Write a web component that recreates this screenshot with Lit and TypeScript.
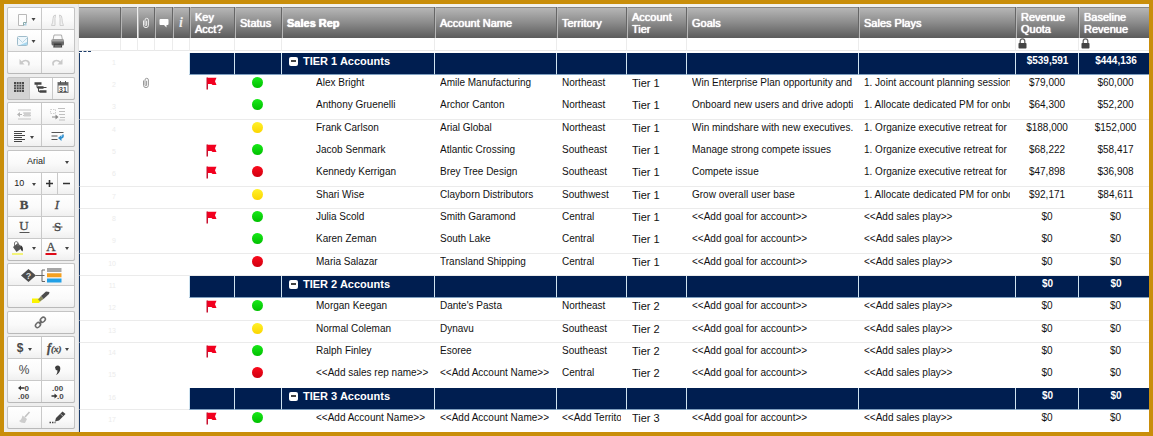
import { LitElement, html, svg, css, nothing } from "lit";
import { customElement, property } from "lit/decorators.js";
import { classMap } from "lit/directives/class-map.js";

type Tone = "green" | "yellow" | "red";

interface TierRow {
  kind: "tier";
  name: string;
  quota: string;
  baseline: string;
  line?: boolean;
}

interface AccountRow {
  kind: "account";
  flag?: boolean;
  clip?: boolean;
  tone: Tone;
  rep: string;
  account: string;
  territory: string;
  tier: string;
  goals: string;
  plays: string;
  quota: string;
  baseline: string;
  line?: boolean;
}

const GOAL = "<<Add goal for account>>";
const PLAY = "<<Add sales play>>";

const account = (
  flag: boolean, tone: Tone, rep: string, name: string, territory: string, tier: string,
  goals = GOAL, plays = PLAY, quota = "$0", baseline = "$0", line = false, clip = false
): AccountRow => ({ kind: "account", flag, tone, rep, account: name, territory, tier, goals, plays, quota, baseline, line, clip });

const ROWS: (TierRow | AccountRow)[] = [
  { kind: "tier", name: "TIER 1 Accounts", quota: "$539,591", baseline: "$444,136" },
  account(true, "green", "Alex Bright", "Amile Manufacturing", "Northeast", "Tier 1", "Win Enterprise Plan opportunity and", "1. Joint account planning session", "$79,000", "$60,000", false, true),
  account(false, "green", "Anthony Gruenelli", "Archor Canton", "Northeast", "Tier 1", "Onboard new users and drive adopti", "1. Allocate dedicated PM for onbo", "$64,300", "$52,200", true),
  account(false, "yellow", "Frank Carlson", "Arial Global", "Northeast", "Tier 1", "Win mindshare with new executives.", "1. Organize executive retreat for", "$188,000", "$152,000"),
  account(true, "green", "Jacob Senmark", "Atlantic Crossing", "Southeast", "Tier 1", "Manage strong compete issues", "1. Organize executive retreat for", "$68,222", "$58,417"),
  account(true, "red", "Kennedy Kerrigan", "Brey Tree Design", "Southeast", "Tier 1", "Compete issue", "1. Organize executive retreat for", "$47,898", "$36,908", true),
  account(false, "yellow", "Shari Wise", "Clayborn Distributors", "Southwest", "Tier 1", "Grow overall user base", "1. Allocate dedicated PM for onbo", "$92,171", "$84,611", true),
  account(true, "green", "Julia Scold", "Smith Garamond", "Central", "Tier 1"),
  account(false, "green", "Karen Zeman", "South Lake", "Central", "Tier 1", GOAL, PLAY, "$0", "$0", true),
  account(false, "red", "Maria Salazar", "Transland Shipping", "Central", "Tier 1", GOAL, PLAY, "$0", "$0", true),
  { kind: "tier", name: "TIER 2 Accounts", quota: "$0", baseline: "$0" },
  account(true, "green", "Morgan Keegan", "Dante's Pasta", "Northeast", "Tier 2", GOAL, PLAY, "$0", "$0", true),
  account(false, "yellow", "Normal Coleman", "Dynavu", "Southeast", "Tier 2", GOAL, PLAY, "$0", "$0", true),
  account(true, "green", "Ralph Finley", "Esoree", "Southeast", "Tier 2"),
  account(false, "red", "<<Add sales rep name>>", "<<Add Account Name>>", "Central", "Tier 2"),
  { kind: "tier", name: "TIER 3 Accounts", quota: "$0", baseline: "$0", line: true },
  account(true, "green", "<<Add Account Name>>", "<<Add Account Name>>", "<<Add Territo", "Tier 3"),
];

const caret = (x: number, y = 12) => svg`<path d="M${x - 2} ${y - 1}h4l-2 3z" fill="#444"/>`;

const clipIcon = (color: string) => html`<svg class="clip" viewBox="0 0 8 12" aria-hidden="true">
  <path d="M1.500 3.500v4.700a2.400 2.400 0 0 0 4.900 0V3a1.700 1.700 0 0 0-3.400 0v5a.8.8 0 0 0 1.600 0V3.800" fill="none" stroke=${color} stroke-width="1"/>
</svg>`;

const ICONS = {
  sheet: svg`<path d="M11.500 6.500h8v8l-3 3h-5z" fill="#fdfdfd" stroke="#b9b9b9"/><path d="M13 17.500h3.500l3-3v3z" fill="#a8cfe4"/><path d="M16.500 17.500v-3h3" fill="none" stroke="#8aa"/>${caret(26.5, 11)}`,
  book: svg`<path d="M14.500 7q-2.500 0-2.500 3.500 0 4-1.500 7h3.500v-7zM18.500 7q2.500 0 2.500 3.500 0 4 1.500 7h-3.500v-7z" fill="#f1f1f1" stroke="#c6c6c6" stroke-width=".8"/>`,
  mail: svg`<rect x="10.500" y="6.500" width="10" height="9" rx="1" fill="#eef7fc" stroke="#9fbccb"/><path d="M11 8l4.500 4.500L20 8" fill="none" stroke="#b9d6e6"/><path d="M13 15l7-3v3z" fill="#a8d8f0"/>${caret(26.5, 11)}`,
  print: svg`<path d="M13 5h7.500l1 5h-9.500z" fill="#fafafa" stroke="#999" stroke-width=".8"/><rect x="10.500" y="9.500" width="12.500" height="6" rx="1.500" fill="#696969"/><rect x="10.500" y="9.500" width="12.500" height="2" fill="#a3a3a3"/><path d="M13 13.500h7.500l.7 4h-9z" fill="#3d3d3d"/><path d="M13.500 16h6.500" stroke="#999"/>`,
  undo: svg`<path d="M14.500 10.500q3-3 6-1.500 2.500 1.500 1 4.500" fill="none" stroke="#c9c9c9" stroke-width="1.600"/><path d="M12.500 7v5.500h5z" fill="#c9c9c9"/>`,
  redo: svg`<path d="M19.500 10.500q-3-3-6-1.500-2.500 1.500-1 4.500" fill="none" stroke="#c9c9c9" stroke-width="1.600"/><path d="M21.500 7v5.500h-5z" fill="#c9c9c9"/>`,
  grid: svg`<rect x="6" y="5" width="10" height="10" fill="#4a4a4a"/><path d="M8.500 5v10M11 5v10M13.500 5v10M6 7.500h10M6 10h10M6 12.500h10" stroke="#bdbdbd" stroke-width=".8"/>`,
  gantt: svg`<path d="M4.500 6.500h7M7.500 10.500h6M9.500 14.500h7" stroke="#444" stroke-width="2.600"/><path d="M7 7v3.500h2M8.500 11v3.500h2M12 10.500h4.500" fill="none" stroke="#444"/>`,
  calendar: svg`<rect x="6" y="5.500" width="10" height="10" fill="#fff" stroke="#777"/><path d="M6 6h10v2.500H6z" fill="#666"/><path d="M8.500 4v3M13.500 4v3" stroke="#555"/><text x="11" y="14.500" text-anchor="middle" class="tiny">31</text>`,
  outdent: svg`<path d="M11 7h13M16 10h8M16 12.500h8M11 16h13" stroke="#c4c4c4"/><path d="M17 9.500h6.500v4H17z" fill="#cfcfcf"/><path d="M10 11.500l3-2.500v5zM12 11h3v1h-3z" fill="#b5b5b5"/>`,
  indent: svg`<path d="M17 5.500h7M18 8.500h6M18 11.500h6M19 14.500h5M18 17h6" stroke="#c0c0c0"/><path d="M9.500 6.500h5v4h-5z" fill="none" stroke="#cfcfcf" stroke-dasharray="1.500 1"/><path d="M11 14h4" stroke="#888"/><path d="M14.500 11.500l3 2.500-3 2.500z" fill="#888"/>`,
  align: svg`<path d="M7 6.500h11M7 8.500h8M7 10.500h11M7 12.500h8M7 14.500h11M7 16.500h8" stroke="#444"/>${caret(25)}`,
  wrap: svg`<path d="M10.500 7.500h12M10.500 11h6M10.500 14.500h6" stroke="#555" stroke-width="1.200"/><path d="M22 9.500v1.500q0 2-2.500 2" fill="none" stroke="#2d8fd0" stroke-width="1.600"/><path d="M17 13l3.500-3v6z" fill="#2d8fd0"/>`,
  bold: svg`<text x="17" y="15" text-anchor="middle" class="serif strong">B</text>`,
  italic: svg`<text x="16" y="15" text-anchor="middle" class="serif slant">I</text>`,
  underline: svg`<text x="17" y="14" text-anchor="middle" class="serif">U</text><path d="M12.500 16.500h10" stroke="#555"/>`,
  strike: svg`<text x="16.500" y="15" text-anchor="middle" class="serif">S</text><path d="M11.500 11h10" stroke="#444"/>`,
  fill: svg`<path d="M6 9l5-4 4 5-5.500 4z" fill="#555"/><path d="M7.500 8V4.500q1.500-2 3.500 0V8" fill="none" stroke="#777"/><path d="M13.500 7q3.500 2 2 6.500-2-1-2-3.500z" fill="#333"/><path d="M5 16h11" stroke="#f3f37a" stroke-width="2"/>${caret(27, 10)}`,
  color: svg`<text x="10" y="13" text-anchor="middle" class="serif">A</text><path d="M4.500 16h11" stroke="#e00b18" stroke-width="2"/>${caret(26, 10)}`,
  conditional: svg`<path d="M14 11.500L21.500 5l7.500 6.500-7.500 6.500z" fill="#4c4c4c"/><text x="21.500" y="15" text-anchor="middle" class="mark">?</text><path d="M29 11.500h8.500M38 6h-3v11.500h3" fill="none" stroke="#666"/><path d="M40 6h14.500" stroke="#a5a5a5" stroke-width="4"/><path d="M40 11.200h14.500" stroke="#f5a020" stroke-width="4"/><path d="M40 16.500h14.500" stroke="#22a0e6" stroke-width="4"/>`,
  highlight: svg`<path d="M25 12.500h8l1 2-2 2.500h-7z" fill="#fbf400"/><path d="M31 13.500l3-3.500 2.500 3-3.500 2.500z" fill="#8a8a5a"/><path d="M34 10l5-4.500 3.500.500-.500 2-5.500 5z" fill="#4d4d4d"/>`,
  link: svg`<g fill="none" stroke="#6b6b6b" stroke-width="1.500"><ellipse cx="31" cy="14" rx="2.900" ry="2.100" transform="rotate(-45 31 14)"/><ellipse cx="35.800" cy="8.800" rx="2.900" ry="2.100" transform="rotate(-45 35.800 8.800)"/><path d="M32 13l3-3.300"/></g>`,
  dollar: svg`<text x="13" y="15" text-anchor="middle" class="sans strong big">$</text>${caret(23)}`,
  formula: svg`<text x="6" y="15" class="serif slant strong fx">f<tspan class="fxs">(x)</tspan></text>${caret(26)}`,
  percent: svg`<text x="17" y="15" text-anchor="middle" class="sans big">%</text>`,
  comma: svg`<path d="M14 8.500q.500-2 2.700-2 2.800.300 2.600 3.500-.300 4-4.300 6 1.700-2.500 1.500-4.500-2.300-.300-2.500-3z" fill="#3d3d3d"/>`,
  lessDecimal: svg`<text x="17.500" y="10" class="deci">0</text><path d="M11 7l3-2.500V6.300h3.500v1.400h-3.500v1.800z" fill="#333"/><text x="11" y="18" class="deci">.00</text>`,
  moreDecimal: svg`<text x="11" y="10" class="deci">.00</text><path d="M16.500 15l-3-2.500v1.800h-3v1.400h3v1.800z" fill="#333"/><text x="16" y="18" class="deci">.0</text>`,
  brush: svg`<path d="M22.500 6l-4.500 5" stroke="#c3c3c3" stroke-width="1.600"/><path d="M15.500 9.500l4.500 3.500-2 4q-3.500.500-6-2 2.500-1 3.500-5.500z" fill="#cdcdcd"/>`,
  pencil: svg`<path d="M14 15.500l1-3.500 6.500-6.500 3 2.500-6.500 6.500z" fill="#444"/><path d="M19.500 8l3 2.500" stroke="#ddd" stroke-width=".7"/><path d="M8.500 16.500h6" stroke="#444" stroke-width="1.600" stroke-dasharray="1.500 1"/>`,
};

type IconName = keyof typeof ICONS;

@customElement("tool-button")
export class ToolButton extends LitElement {
  @property() icon: IconName = "sheet";
  @property() label = "";
  @property({ type: Number }) span = 34;
  @property({ type: Boolean }) active = false;

  static styles = css`
    :host { display: block; min-width: 0; }
    .tool {
      display: flex; align-items: center; justify-content: center;
      width: 100%; height: 100%; padding: 0; border: 0; overflow: hidden;
      background: linear-gradient(#fff, #fafafa 60%, #f0f0f0);
    }
    .tool.active { background: #d3d3d3; }
    svg { display: block; flex: none; height: 22px; }
    text { fill: #484848; font-family: "Liberation Sans", Arial, sans-serif; font-size: 10px; }
    .serif { font-family: "Liberation Serif", "Times New Roman", serif; font-size: 13px; stroke: #484848; stroke-width: .3px; }
    .strong { font-weight: bold; }
    .slant { font-style: italic; }
    .big { font-size: 12px; }
    .tiny { font-size: 7px; font-weight: bold; }
    .mark { font-size: 9px; font-weight: bold; fill: #ddd; }
    .fx { font-size: 12px; }
    .fxs { font-size: 9px; }
    .deci { font-size: 8px; font-weight: bold; }
  `;

  render() {
    return html`<button class=${classMap({ tool: true, active: this.active })} type="button" aria-label=${this.label} title=${this.label}>
      <svg width=${this.span} viewBox="0 0 ${this.span} 22" aria-hidden="true">${ICONS[this.icon]}</svg>
    </button>`;
  }
}

@customElement("sheet-toolbar")
export class SheetToolbar extends LitElement {
  static styles = css`
    :host {
      display: flex; flex-direction: column; justify-content: space-between;
      box-sizing: border-box; width: 75px; flex: none;
      padding: 3px 3px 4px; background: #eee;
      font-family: "Liberation Sans", Arial, sans-serif;
    }
    .group {
      display: grid; grid-template-columns: 1fr 1fr; grid-auto-rows: 21px; gap: 1px;
      background: #c9c9c9; border: 1px solid #c4c4c4; border-bottom: 0; border-radius: 2px; overflow: hidden;
      box-shadow: 0 1px 0 #b9b9b9;
    }
    .three { grid-template-columns: 1fr 1fr 1fr; }
    .one { grid-template-columns: 1fr; }
    .wide { grid-column: 1 / -1; }
    .pair { display: grid; grid-template-columns: 1fr 1fr; gap: 1px; }
    .picker { position: relative; display: block; background: linear-gradient(#fff, #fafafa 60%, #f0f0f0); }
    .picker select {
      appearance: none; display: block; width: 100%; height: 100%; margin: 0; padding: 0 10px 0 0; border: 0;
      background: none; color: #222; font: 9px "Liberation Sans", Arial, sans-serif; text-align-last: center;
    }
    .picker svg { position: absolute; right: 5px; top: 10px; width: 4px; height: 3px; }
    .step { padding: 0; border: 0; background: linear-gradient(#fff, #fafafa 60%, #f0f0f0); display: grid; place-items: center; }
    .step svg { width: 7px; height: 7px; }
  `;

  private tool(icon: IconName, label: string, span = 34, active = false) {
    return html`<tool-button .icon=${icon} .label=${label} .span=${span} .active=${active}></tool-button>`;
  }

  private arrow() {
    return html`<svg viewBox="0 0 4 3" aria-hidden="true"><path d="M0 0h4L2 3z" fill="#444"/></svg>`;
  }

  render() {
    return html`
      <div class="group">
        ${this.tool("sheet", "New")}${this.tool("book", "Open")}
        ${this.tool("mail", "Send")}${this.tool("print", "Print")}
        ${this.tool("undo", "Undo")}${this.tool("redo", "Redo")}
      </div>
      <div class="group three">
        ${this.tool("grid", "Grid view", 22, true)}${this.tool("gantt", "Gantt view", 22)}${this.tool("calendar", "Calendar view", 22)}
      </div>
      <div class="group">
        ${this.tool("outdent", "Outdent")}${this.tool("indent", "Indent")}
        ${this.tool("align", "Align")}${this.tool("wrap", "Wrap text")}
      </div>
      <div class="group">
        <label class="picker wide"><select aria-label="Font"><option>Arial</option></select>${this.arrow()}</label>
        <label class="picker"><select aria-label="Font size"><option>10</option></select>${this.arrow()}</label>
        <div class="pair">
          <button class="step" type="button" aria-label="Larger"><svg viewBox="0 0 7 7"><path d="M3.500 0v7M0 3.500h7" stroke="#333" stroke-width="1.600"/></svg></button>
          <button class="step" type="button" aria-label="Smaller"><svg viewBox="0 0 7 7"><path d="M0 3.500h7" stroke="#333" stroke-width="1.600"/></svg></button>
        </div>
        ${this.tool("bold", "Bold")}${this.tool("italic", "Italic")}
        ${this.tool("underline", "Underline")}${this.tool("strike", "Strikethrough")}
        ${this.tool("fill", "Fill color")}${this.tool("color", "Text color")}
      </div>
      <div class="group one">
        ${this.tool("conditional", "Conditional formatting", 68)}
        ${this.tool("highlight", "Highlight changes", 68)}
      </div>
      <div class="group one">${this.tool("link", "Hyperlink", 68)}</div>
      <div class="group">
        ${this.tool("dollar", "Currency")}${this.tool("formula", "Formula")}
        ${this.tool("percent", "Percent")}${this.tool("comma", "Thousands")}
        ${this.tool("lessDecimal", "Decrease decimal")}${this.tool("moreDecimal", "Increase decimal")}
      </div>
      <div class="group">${this.tool("brush", "Format painter")}${this.tool("pencil", "Edit")}</div>
    `;
  }
}

@customElement("account-sheet")
export class AccountSheet extends LitElement {
  static styles = css`
    :host { display: block; flex: 1; min-width: 0; padding-top: 3px; background: linear-gradient(#f1f1ee 0 3px, #fff 3px); }
    table { width: 100%; border-collapse: separate; border-spacing: 0; table-layout: fixed;
      font: 10px/16px "Liberation Sans", Arial, sans-serif; color: #111; }
    th, td { padding: 0; }
    .c-num { width: 41px; } .c-slim { width: 17px; } .c-info { width: 18px; }
    .c-key { width: 45px; } .c-status { width: 47px; } .c-rep { width: 153px; } .c-acct { width: 122px; }
    .c-terr { width: 70px; } .c-tier { width: 60px; } .c-plays { width: 157px; } .c-quota { width: 63px; } .c-base { width: 71px; }

    .head th {
      height: 31px; box-sizing: border-box; padding-left: 5px; text-align: left; vertical-align: middle;
      font-size: 11px; line-height: 12px; font-weight: normal; color: #fff; text-shadow: 0 0 1px #fff, 0 0 1px #fff;
      background: linear-gradient(#878787 0 1px, #b6b6b6 1px, #8c8c8c 50%, #5b5b5b);
      border-left: 1px solid #666; box-shadow: inset 1px 0 0 #b5b5b5; overflow: hidden;
    }
    .head th:first-child { border-left: 0; box-shadow: none; }
    .head th.strong { font-weight: bold; }
    .head th.icon { padding: 0; text-align: center; }
    .head th.bright { border-left-color: #eee; }
    .head svg { display: block; margin: 0 auto; }
    .info { font: italic bold 14px/14px "Liberation Serif", serif; text-shadow: none; color: #eee; }
    .clip { width: 8px; height: 12px; }

    .locks td { height: 15px; vertical-align: top; }
    .locks div { height: 12px; border-bottom: 1px solid #e8e8e8; border-left: 1px solid #ececec; }
    .locks td:first-child div { border-left: 0; }
    .locks td:first-child::after { content: ""; display: block; width: 12px; border-top: 1px dashed #1c3c69; }
    .locks svg { display: block; margin-left: 2px; width: 9px; height: 11px; }

    tbody tr { height: 22px; }
    tbody tr:nth-child(3n) { height: 23px; }
    tbody td, tbody th { box-sizing: border-box; vertical-align: top; font-weight: normal; text-align: left; }
    .line td, .line th { border-bottom: 1px solid #ebebeb; }
    tbody tr > :first-child { border-left: 1px solid #1c3c69; }
    .num { color: #ececec; font-size: 7px; text-align: right; padding: 2px 4px 0 0; }
    .cell { overflow: hidden; white-space: nowrap; margin: 0 5px 0 6px; }
    .rep .cell { margin-left: 35px; margin-right: 0; }
    .tier { font-size: 11px; }
    .money { text-align: center; }
    .money .cell { margin: 0 0 0 1px; }
    .base .cell { margin-left: 4px; }
    .pic svg { display: block; margin: 2px auto 0; }
    .pic .flag { width: 11px; height: 13px; }
    .dot { display: block; width: 11px; height: 11px; margin: 2px auto 0; border-radius: 50%; }
    .green { background: linear-gradient(#18e818, #00c000); }
    .yellow { background: linear-gradient(#fff12b, #fbd500); }
    .red { background: linear-gradient(#fb0a1c, #cf0010); }

    .band td.navy, .band th.navy {
      background: #001e50; color: #fff; font-weight: bold; border-left: 1px solid #cfe3f0; border-bottom: 1px solid #7f9fbf;
    }
    .title { display: flex; align-items: center; gap: 5px; height: 16px; margin-left: 7px; font-size: 11px; white-space: nowrap; }
    .toggle { display: grid; place-items: center; width: 9px; height: 9px; padding: 0; border: 0; border-radius: 2px; background: #fff; }
    .toggle svg { width: 5px; height: 2px; }
  `;

  private lock() {
    return html`<svg viewBox="0 0 9 11" aria-hidden="true"><path d="M2.200 5.500V3.200a2.300 2.300 0 0 1 4.600 0v2.300" fill="none" stroke="#666" stroke-width="1.300"/><rect x=".5" y="5" width="8" height="5.500" rx=".8" fill="#444"/></svg>`;
  }

  private tierRow(row: TierRow, n: number) {
    return html`<tr class=${classMap({ band: true, line: !!row.line })}>
      <td class="num">${n}</td><td></td><td></td><td></td><td></td>
      <td class="navy"></td><td class="navy"></td>
      <th class="navy" scope="row"><div class="title">
        <button class="toggle" type="button" aria-label="Collapse"><svg viewBox="0 0 5 2"><path d="M0 1h5" stroke="#444" stroke-width="2"/></svg></button>
        <span>${row.name}</span></div></th>
      <td class="navy"></td><td class="navy"></td><td class="navy"></td><td class="navy"></td><td class="navy"></td>
      <td class="navy money"><div class="cell">${row.quota}</div></td>
      <td class="navy money base"><div class="cell">${row.baseline}</div></td>
    </tr>`;
  }

  private accountRow(row: AccountRow, n: number) {
    return html`<tr class=${classMap({ line: !!row.line })}>
      <td class="num">${n}</td><td></td>
      <td class="pic">${row.clip ? clipIcon("#999") : nothing}</td><td></td><td></td>
      <td class="pic">${row.flag
        ? html`<svg class="flag" viewBox="0 0 11 13" role="img" aria-label="Key account"><path d="M.5.500h1.500V12.500H.5z" fill="#c8102e"/><path d="M1.500.800h9l-1.500 3.400 1.500 3.800h-4l-1-1h-4z" fill="#f2001f"/></svg>`
        : nothing}</td>
      <td class="pic"><span class=${`dot ${row.tone}`} role="img" aria-label=${row.tone}></span></td>
      <td class="rep"><div class="cell">${row.rep}</div></td>
      <td><div class="cell">${row.account}</div></td>
      <td><div class="cell">${row.territory}</div></td>
      <td class="tier"><div class="cell">${row.tier}</div></td>
      <td><div class="cell">${row.goals}</div></td>
      <td><div class="cell">${row.plays}</div></td>
      <td class="money"><div class="cell">${row.quota}</div></td>
      <td class="money base"><div class="cell">${row.baseline}</div></td>
    </tr>`;
  }

  render() {
    return html`<table>
      <colgroup>
        <col class="c-num"><col class="c-slim"><col class="c-slim"><col class="c-info"><col class="c-slim">
        <col class="c-key"><col class="c-status"><col class="c-rep"><col class="c-acct"><col class="c-terr">
        <col class="c-tier"><col><col class="c-plays"><col class="c-quota"><col class="c-base">
      </colgroup>
      <thead>
        <tr class="head">
          <th></th><th></th>
          <th class="icon bright">${clipIcon("#eee")}</th>
          <th class="icon"><svg width="10" height="10" viewBox="0 0 10 10" aria-hidden="true"><path d="M1.500 1h7q1 0 1 1v4q0 1-1 1h-1v2.500L5 7H1.500q-1 0-1-1V2q0-1 1-1z" fill="#fff"/></svg></th>
          <th class="icon"><span class="info">i</span></th>
          <th>Key<br>Acct?</th><th>Status</th><th class="strong">Sales Rep</th><th>Account Name</th><th>Territory</th>
          <th>Account<br>Tier</th><th>Goals</th><th>Sales Plays</th><th>Revenue<br>Quota</th><th>Baseline<br>Revenue</th>
        </tr>
        <tr class="locks">
          ${Array.from({ length: 15 }, (_, i) => html`<td><div>${i > 12 ? this.lock() : nothing}</div></td>`)}
        </tr>
      </thead>
      <tbody>
        ${ROWS.map((row, i) => (row.kind === "tier" ? this.tierRow(row, i + 1) : this.accountRow(row, i + 1)))}
      </tbody>
    </table>`;
  }
}

@customElement("app-root")
export class AppRoot extends LitElement {
  static styles = css`
    :host { display: flex; box-sizing: border-box; min-height: 100vh; border: 4px solid #c98e0a; background: #fff; }
    .rail { border-right: 1px solid #e2e2e2; }
  `;

  render() {
    return html`<sheet-toolbar class="rail"></sheet-toolbar><account-sheet></account-sheet>`;
  }
}
